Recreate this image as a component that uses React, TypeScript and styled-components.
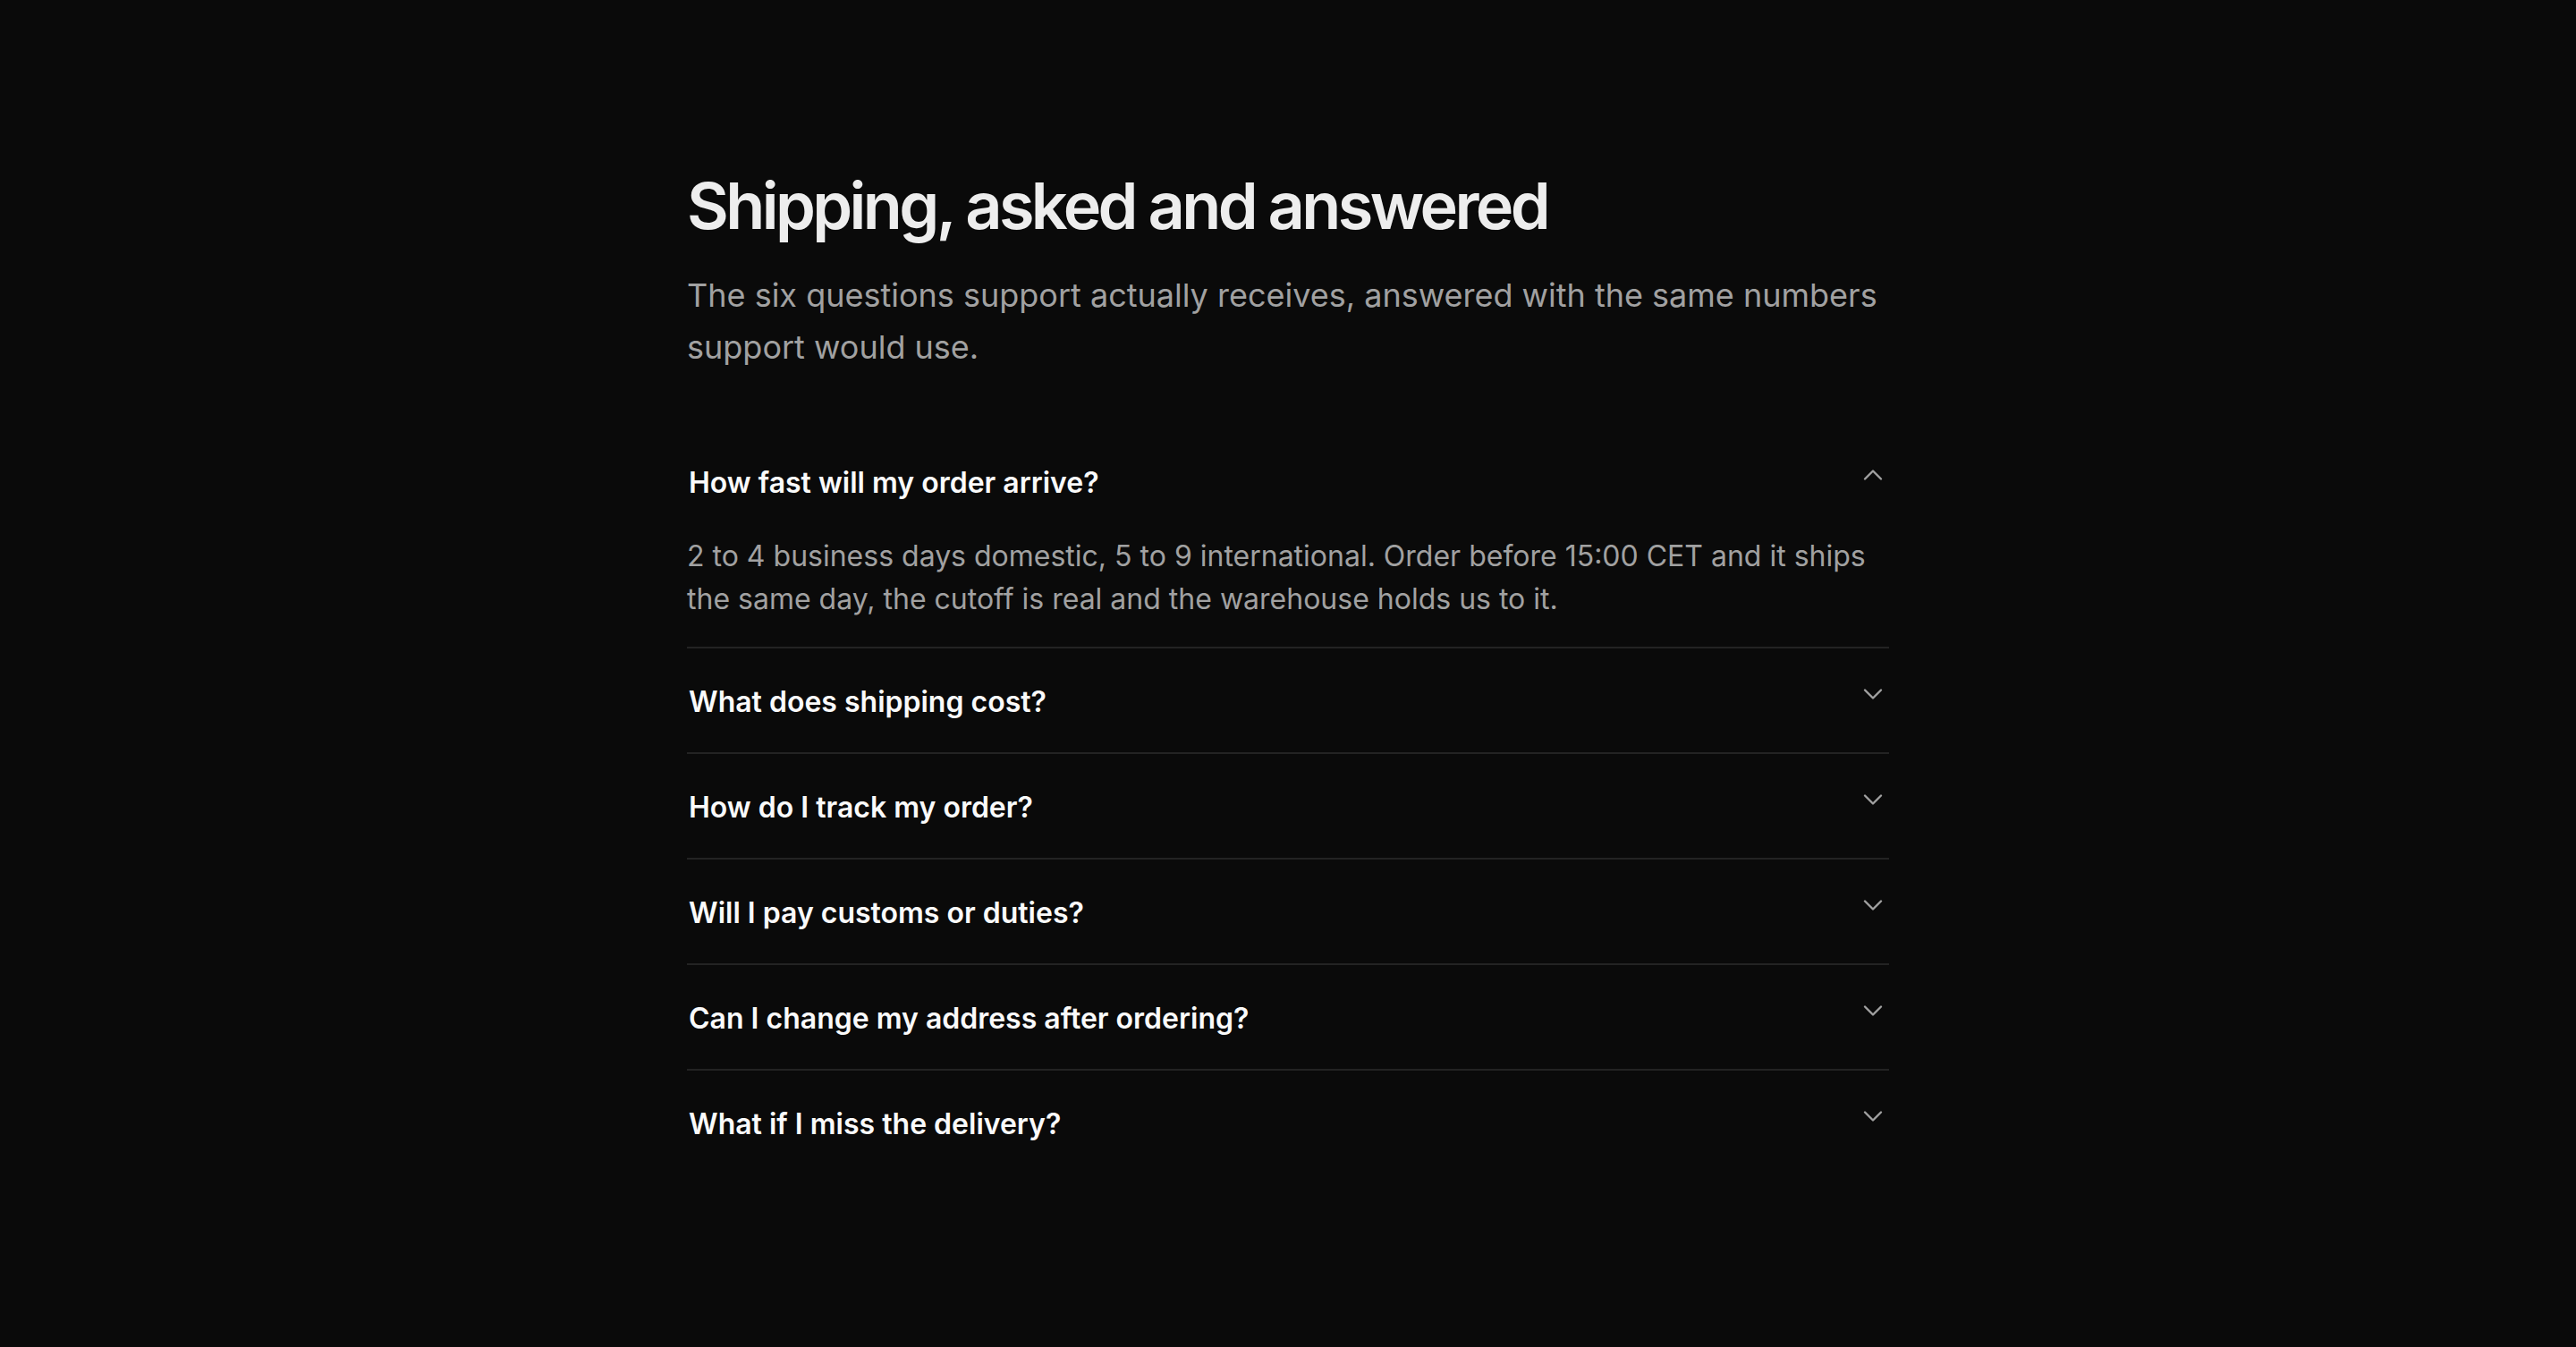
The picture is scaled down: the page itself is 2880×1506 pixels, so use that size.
import React, { useState } from "react";
import styled, { createGlobalStyle } from "styled-components";

const GlobalStyle = createGlobalStyle`
  html, body {
    margin: 0;
    padding: 0;
    background: #0a0a0a;
  }
  body {
    font-family: Inter, "Noto Sans", "Liberation Sans", sans-serif;
    -webkit-font-smoothing: antialiased;
  }
  * {
    box-sizing: border-box;
  }
`;

const faqs = [
  {
    q: "How fast will my order arrive?",
    a: "2 to 4 business days domestic, 5 to 9 international. Order before 15:00 CET and it ships the same day, the cutoff is real and the warehouse holds us to it.",
  },
  {
    q: "What does shipping cost?",
    a: "Free on orders over €60. Below that it is a flat €4.90 domestic and €12 international.",
  },
  {
    q: "How do I track my order?",
    a: "A tracking link lands in your inbox the moment the label is printed.",
  },
  {
    q: "Will I pay customs or duties?",
    a: "Inside the EU, no. Outside, duties are collected by the carrier on delivery.",
  },
  {
    q: "Can I change my address after ordering?",
    a: "Yes, until the order ships. Reply to your confirmation email and we will update it.",
  },
  {
    q: "What if I miss the delivery?",
    a: "The carrier leaves a note and tries again the next working day.",
  },
];

const Chevron = ({ up }: { up: boolean }) => (
  <svg
    width="36"
    height="36"
    viewBox="0 0 24 24"
    fill="none"
    stroke="currentColor"
    strokeWidth="1.6"
    strokeLinecap="round"
    strokeLinejoin="round"
  >
    <path d={up ? "m6 15 6-6 6 6" : "m6 9 6 6 6-6"} />
  </svg>
);

const App: React.FC = () => {
  const [open, setOpen] = useState<number | null>(0);

  return (
    <Page>
      <GlobalStyle />
      <Column>
        <Title>Shipping, asked and answered</Title>
        <Lead>
          The six questions support actually receives, answered with the same
          numbers support would use.
        </Lead>
        <List>
          {faqs.map((item, i) => (
            <Item key={item.q} $last={i === faqs.length - 1}>
              <Trigger onClick={() => setOpen(open === i ? null : i)}>
                <Question>{item.q}</Question>
                <Icon>
                  <Chevron up={open === i} />
                </Icon>
              </Trigger>
              {open === i && <Answer>{item.a}</Answer>}
            </Item>
          ))}
        </List>
      </Column>
    </Page>
  );
};

const Page = styled.main`
  min-height: 1506px;
  background: #0a0a0a;
  padding: 190px 0 120px;
`;

const Column = styled.section`
  width: 1344px;
  margin: 0 auto;
`;

const Title = styled.h1`
  margin: 0;
  font-size: 72px;
  line-height: 79px;
  font-weight: 600;
  letter-spacing: -0.05em;
  color: #ededed;
`;

const Lead = styled.p`
  margin: 33px 0 0;
  font-size: 36px;
  line-height: 57.6px;
  font-weight: 400;
  color: #a1a1a1;
`;

const List = styled.div`
  margin-top: 63px;
`;

const Item = styled.div<{ $last: boolean }>`
  border-bottom: ${(p) => (p.$last ? "none" : "2px solid #232323")};
`;

const Trigger = styled.button`
  width: 100%;
  display: flex;
  align-items: flex-start;
  justify-content: space-between;
  gap: 32px;
  padding: 37px 0 33px 2px;
  background: none;
  border: none;
  cursor: pointer;
  text-align: left;
  font-family: inherit;
`;

const Question = styled.span`
  font-size: 32px;
  line-height: 46px;
  font-weight: 600;
  color: #fafafa;
`;

const Icon = styled.span`
  display: flex;
  flex-shrink: 0;
  margin-top: -4px;
  color: #a1a1a1;
`;

const Answer = styled.p`
  margin: 2px 0 0;
  padding: 0 20px 29px 0;
  font-size: 32px;
  line-height: 48px;
  color: #a1a1a1;
`;

export default App;
